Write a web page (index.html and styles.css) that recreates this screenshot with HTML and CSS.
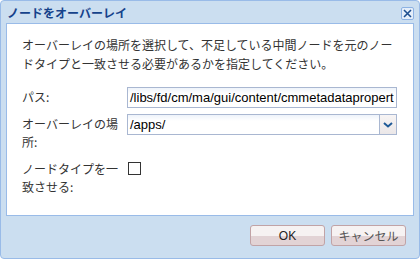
FILE: index.html
```html
<!DOCTYPE html>
<html lang="ja">
<head>
    <meta charset="UTF-8">
    <title>ノードをオーバーレイ</title>
    <link rel="stylesheet" href="styles.css">
</head>
<body>
    <div class="window">
        <div class="window-header">
            <span class="window-title">ノードをオーバーレイ</span>
            <span class="tool-close">
                <svg width="11" height="11" viewBox="0 0 11 11">
                    <path d="M2 2 L9 9 M9 2 L2 9" stroke="#1d4e8f" stroke-width="1.6" fill="none"/>
                </svg>
            </span>
        </div>
        <div class="window-body">
            <p class="intro">オーバーレイの場所を選択して、不足している中間ノードを元のノードタイプと一致させる必要があるかを指定してください。</p>
            <div class="form-row">
                <label class="form-label">パス:</label>
                <div class="field text-field">/libs/fd/cm/ma/gui/content/cmmetadatapropert</div>
            </div>
            <div class="form-row">
                <label class="form-label">オーバーレイの場所:</label>
                <div class="field combo">
                    <span class="combo-value">/apps/</span>
                    <span class="combo-trigger">
                        <svg width="10" height="6" viewBox="0 0 10 6">
                            <path d="M1 1 L5 4.5 L9 1" stroke="#1f5a97" stroke-width="2" fill="none"/>
                        </svg>
                    </span>
                </div>
            </div>
            <div class="form-row check-row">
                <label class="form-label">ノードタイプを一致させる:</label>
                <span class="checkbox"></span>
            </div>
        </div>
        <div class="window-footer">
            <button class="btn btn-ok">OK</button>
            <button class="btn btn-cancel">キャンセル</button>
        </div>
    </div>
</body>
</html>
```

FILE: styles.css
```css
* {
    box-sizing: border-box;
}
body {
    margin: 0;
    font-family: "Noto Sans CJK JP", "Liberation Sans", sans-serif;
    font-size: 12px;
    background-color: #ffffff;
}
.window {
    width: 420px;
    height: 259px;
    border: 1px solid #99bbe8;
    border-radius: 4px;
    background-color: #cbdef0;
    padding: 0 5px;
    display: flex;
    flex-direction: column;
}
.window-header {
    height: 22px;
    display: flex;
    align-items: center;
    justify-content: space-between;
    padding-left: 1px;
}
.window-title {
    font-weight: bold;
    color: #15428b;
    font-size: 12px;
}
.tool-close {
    width: 13px;
    height: 13px;
    margin-top: 2px;
    border: 1px solid #8db2e3;
    border-radius: 2px;
    background-color: #e4eefa;
    display: flex;
    align-items: center;
    justify-content: center;
}
.window-body {
    height: 193px;
    background-color: #ffffff;
    border: 1px solid #99bbe8;
    padding: 11px 15px 0 15px;
}
.intro {
    margin: 0 0 14px 0;
    color: #333333;
    line-height: 19px;
}
.form-row {
    display: flex;
    align-items: flex-start;
    margin-bottom: 6px;
}
.form-label {
    width: 105px;
    color: #333333;
    line-height: 18px;
    padding-top: 1px;
}
.field {
    width: 270px;
    height: 21px;
    border: 1px solid #a9b7d1;
    background: linear-gradient(#eef3fa, #ffffff 6px);
}
.text-field {
    font-family: "Liberation Sans", sans-serif;
    font-size: 13px;
    line-height: 19px;
    padding-left: 2px;
    color: #000000;
    white-space: nowrap;
    overflow: hidden;
}
.combo {
    display: flex;
}
.combo-value {
    flex: 1;
    font-family: "Liberation Sans", sans-serif;
    font-size: 13px;
    line-height: 19px;
    padding-left: 2px;
}
.combo-trigger {
    width: 17px;
    border-left: 1px solid #a9b7d1;
    background: linear-gradient(#f7f4f4, #ebe7e8);
    display: flex;
    align-items: center;
    justify-content: center;
}
.check-row {
    margin-top: 8px;
}
.checkbox {
    width: 13px;
    height: 13px;
    margin-top: 3px;
    margin-left: 1px;
    border: 1px solid #333333;
    background-color: #ffffff;
}
.window-footer {
    display: flex;
    justify-content: flex-end;
    gap: 6px;
    padding: 9px 8px 0 0;
}
.btn {
    width: 75px;
    height: 21px;
    border: 1px solid #c1a3a6;
    border-radius: 3px;
    background: linear-gradient(#f6f2f2 50%, #e2d3d5 50%);
    font-family: "Liberation Sans", "Noto Sans CJK JP", sans-serif;
    font-size: 12px;
    color: #222222;
    padding: 0;
    cursor: pointer;
}
.btn-cancel {
    color: #555555;
}
```
